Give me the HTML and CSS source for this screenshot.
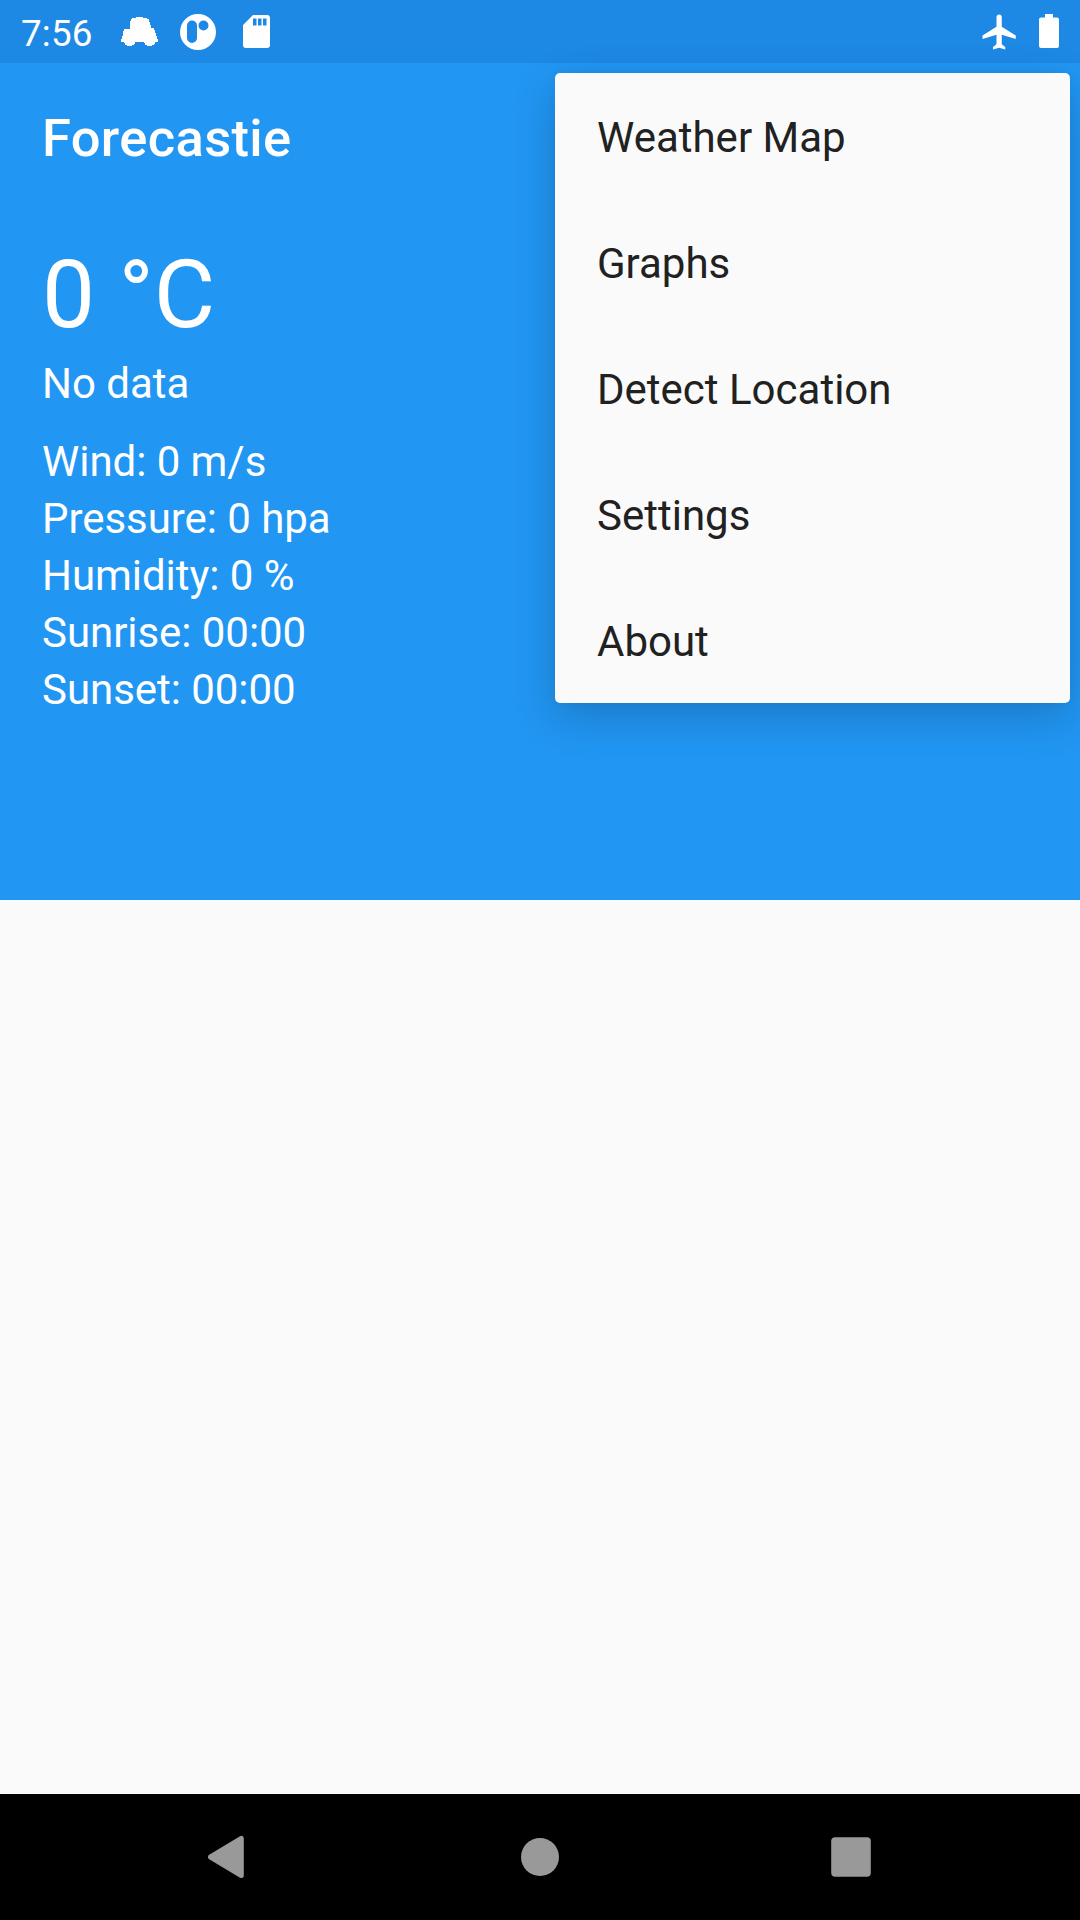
FILE: index.html
```html
<!DOCTYPE html>
<html lang="en">
<head>
<meta charset="utf-8">
<title>Forecastie</title>
<link rel="stylesheet" href="styles.css">
</head>
<body>
<div class="screen">
  <header class="status-bar">
    <span class="clock">7:56</span>
    <svg class="car" width="38" height="30" viewBox="0 0 38 30"><path d="M15 0H22V1H26V2H28V5H29V8H30V11H33V13H34V16H35V19H36V22H37V25H34V27H33V28H31V29H26V28H24V26H23V25H14V27H13V28H11V29H6V28H4V26H3V25H0V22H1V19H2V14H3V12H9V4H10V2H11V1H15Z"/></svg>
    <svg class="badge" width="38" height="38" viewBox="0 0 38 38"><path fill-rule="evenodd" d="M19 1a18 18 0 1 0 0 36 18 18 0 0 0 0-36zM13 7.500a5 5 0 0 1 5 5v12.500a5 5 0 0 1-10 0V12.500a5 5 0 0 1 5-5zm11.500 0a5 5 0 1 1 0 10 5 5 0 0 1 0-10z"/></svg>
    <svg class="sd" width="27" height="33" viewBox="0 0 27 33"><path fill-rule="evenodd" d="M10 0h14q3 0 3 3v27q0 3-3 3H3q-3 0-3-3V10zM10 3.500v7h3.500v-7zM15 3.500v7h3.500v-7zM20 3.500v7h3.500v-7z"/></svg>
    <svg class="plane" width="42" height="42" viewBox="0 0 24 24"><path d="M21 16v-2l-8-5V3.500c0-.83-.67-1.500-1.500-1.500S10 2.670 10 3.500V9l-8 5v2l8-2.500V19l-2 1.500V22l3.500-1 3.500 1v-1.500L13 19v-5.500l8 2.500z"/></svg>
    <svg class="battery" width="20" height="34" viewBox="0 0 20 34"><path d="M6 0h8v3.500h4q2 0 2 2V32q0 2-2 2H2q-2 0-2-2V5.500q0-2 2-2h4z"/></svg>
  </header>
  <main class="weather">
    <h1 class="title">Forecastie</h1>
    <p class="temperature">0 °C</p>
    <p class="summary">No data</p>
    <ul class="details">
      <li>Wind: 0 m/s</li>
      <li>Pressure: 0 hpa</li>
      <li>Humidity: 0 %</li>
      <li>Sunrise: 00:00</li>
      <li>Sunset: 00:00</li>
    </ul>
  </main>
  <section class="forecast"></section>
  <nav class="nav-bar">
    <svg width="42" height="46" viewBox="0 0 42 46"><path d="M33.300 4.500v37L2.500 23z" stroke-width="5" stroke-linejoin="round"/></svg>
    <svg width="42" height="46" viewBox="0 0 42 46"><circle cx="21" cy="23" r="19"/></svg>
    <svg width="42" height="46" viewBox="0 0 42 46"><rect x="1.200" y="3.200" width="39.600" height="39.600" rx="4"/></svg>
  </nav>
  <ul class="menu">
    <li>Weather Map</li>
    <li>Graphs</li>
    <li>Detect Location</li>
    <li>Settings</li>
    <li>About</li>
  </ul>
</div>
</body>
</html>
```
FILE: styles.css
```css
* { box-sizing: border-box; margin: 0; padding: 0; }
ul { list-style: none; }

.screen {
  position: relative;
  display: flex;
  flex-direction: column;
  width: 1080px;
  height: 1920px;
  overflow: hidden;
  background: #fafafa;
  color: #fff;
  font-family: Roboto, sans-serif;
  font-size: 42px;
}

.status-bar {
  display: flex;
  align-items: flex-start;
  height: 63px;
  padding: 0 21px;
  background: #1e88e5;
  fill: #fff;
}
.clock { width: 100px; font-size: 36.75px; letter-spacing: 0.2px; line-height: 67px; }
.car { margin-top: 17px; }
.badge { margin: 13px 0 0 20px; }
.sd { margin: 15px 0 0 26px; }
.plane { margin: 11px 0 0 auto; }
.battery { margin: 14px 0 0 18px; }

.weather {
  height: 837px;
  padding: 41px 42px 0;
  background: #2196f3;
}
.title { font-size: 52.5px; font-weight: 500; letter-spacing: 0.35px; line-height: 68px; }
.temperature { margin-top: 67px; font-size: 94.5px; line-height: 111px; }
.summary { margin-top: 5px; line-height: 57px; }
.details { margin-top: 21px; letter-spacing: -0.05px; line-height: 57px; }

.forecast { flex: 1; }

.nav-bar {
  display: flex;
  align-items: center;
  justify-content: center;
  gap: 269px;
  height: 126px;
  background: #000;
  fill: #999;
}
.nav-bar path { stroke: #999; }

.menu {
  position: absolute;
  top: 73px;
  right: 10px;
  width: 515px;
  border-radius: 5px;
  background: #fafafa;
  box-shadow: 0 14px 44px rgba(0, 0, 0, 0.19), 0 0 8px rgba(0, 0, 0, 0.04);
  color: #212121;
}
.menu li { height: 126px; padding-left: 42px; line-height: 130px; }
```
